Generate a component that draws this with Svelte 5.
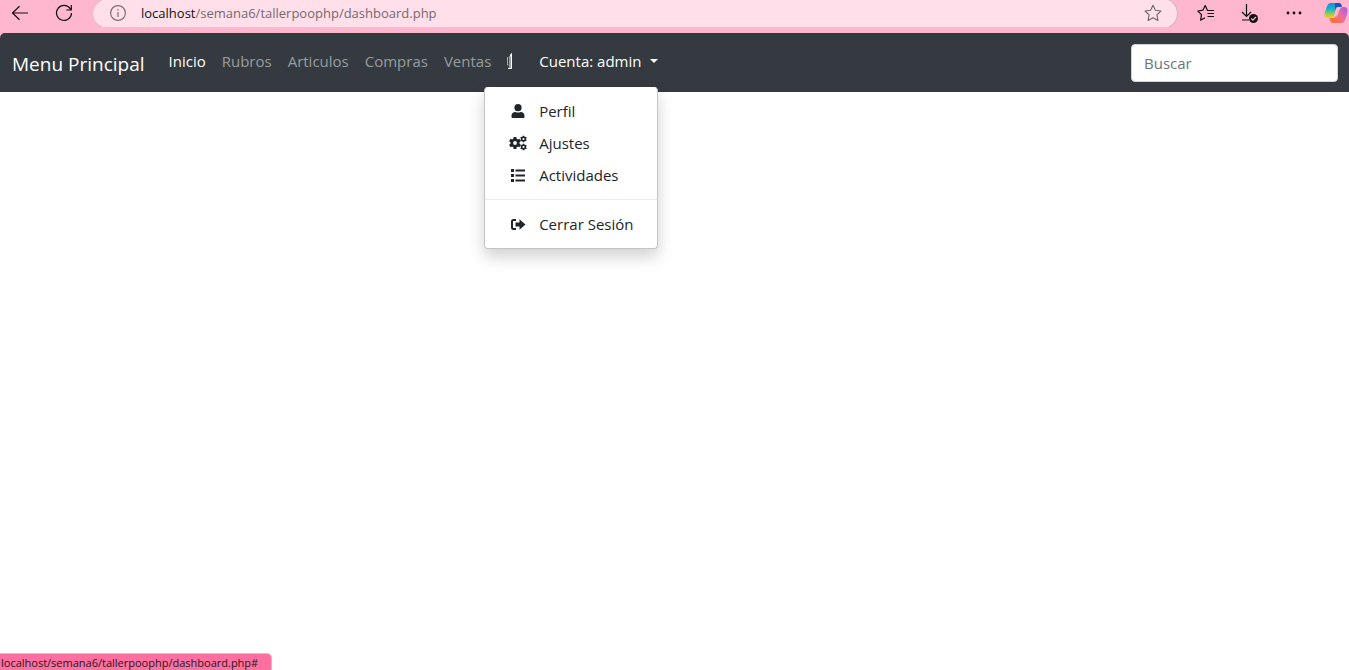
<script>
  const links = ['Inicio', 'Rubros', 'Articulos', 'Compras', 'Ventas'];
  const teeth = [0, 60, 120, 180, 240, 300];
  let open = $state(true);
</script>

{#snippet gear(cx, cy, s)}
  <g transform="translate({cx} {cy}) scale({s})">
    {#each teeth as a}
      <path d="M-1.4-6h2.8l.4 3h-3.6z" transform="rotate({a})" />
    {/each}
    <path fill-rule="evenodd" d="M0-4.5a4.5 4.5 0 1 0 0 9a4.5 4.5 0 0 0 0-9zM0-1.9a1.9 1.9 0 1 1 0 3.8a1.9 1.9 0 0 1 0-3.8z" />
  </g>
{/snippet}

<div class="page">
  <div class="browser">
    <button class="tool back" aria-label="Atrás">
      <svg width="18" height="16" viewBox="0 0 18 16" fill="none" stroke="#111" stroke-width="1.2"><path d="M17 8H1.5M8.5 1.2L1.5 8l7 6.8" /></svg>
    </button>
    <button class="tool reload" aria-label="Actualizar">
      <svg width="18" height="18" viewBox="0 0 18 18" fill="none" stroke="#111" stroke-width="1.2"><path d="M16.5 9a7.5 7.5 0 1 1-1.3-4.300L16 6M16.300 1v5h-5" /></svg>
    </button>
    <div class="address">
      <svg width="18" height="18" viewBox="0 0 18 18" fill="none" stroke="#7d6f74" stroke-width="1.2"><circle cx="9" cy="9" r="7.4" /><path d="M9 8v5M9 5v1.5" /></svg>
      <span class="url"><b>localhost</b>/semana6/tallerpoophp/dashboard.php</span>
      <button class="tool" aria-label="Favorito">
        <svg width="18" height="18" viewBox="0 0 18 18" fill="none" stroke="#716369" stroke-width="1.1" stroke-linejoin="round"><path d="M9 1.3l2.4 5 5.5.7-4 3.8 1 5.6L9 13.7l-4.9 2.7 1-5.6-4-3.8 5.5-.7z" /></svg>
      </button>
    </div>
    <div class="tools">
      <button class="tool" aria-label="Favoritos">
        <svg width="18" height="18" viewBox="0 0 18 18" fill="none" stroke="#111" stroke-width="1.2" stroke-linejoin="round"><path d="M11.500 6.500H10.500L8.200 1.500 5.900 6.200.8 7l3.700 3.700-.9 5.400 4.400-2.300M10.500 6.500H17M10.500 9.500H17M10.500 12.500H17" /></svg>
      </button>
      <button class="tool" aria-label="Descargas">
        <svg width="18" height="20" viewBox="0 0 18 20" fill="none" stroke="#111" stroke-width="1.200"><path d="M5.500 1v12M1 9l4.500 4.500L10 9M1 17h7" /><circle cx="12.500" cy="15.500" r="4.500" fill="#111" stroke="none" /><path d="M10.300 15.500l1.600 1.600 3-3.100" stroke="#ffb6cf" /></svg>
      </button>
      <button class="tool" aria-label="Más">
        <svg width="18" height="18" viewBox="0 0 18 18" fill="#111"><circle cx="3" cy="9" r="1.400" /><circle cx="9" cy="9" r="1.400" /><circle cx="15" cy="9" r="1.400" /></svg>
      </button>
      <button class="tool" aria-label="Copilot">
        <svg width="24" height="22" viewBox="0 0 24 22">
          <defs>
            <linearGradient id="cool" x1="0" y1="0" x2="0" y2="1"><stop offset="0" stop-color="#1689e8" /><stop offset=".45" stop-color="#20b8c3" /><stop offset=".75" stop-color="#a6cf3d" /><stop offset="1" stop-color="#f7c915" /></linearGradient>
            <linearGradient id="warm" x1="1" y1="0" x2="0" y2="1"><stop offset="0" stop-color="#a15aed" /><stop offset=".5" stop-color="#ee6e9c" /><stop offset="1" stop-color="#fb6b35" /></linearGradient>
          </defs>
          <path fill="url(#cool)" d="M7 1h9c-3 0-3 3-4 6l-2 6c-1 2-2 3-4 3H4c-4 0-4-3-3-6l2-6c1-2 2-3 4-3z" />
          <path fill="#1856bd" d="M11 1h4c2 0 2.500 1.500 3 4h-4c-2 0-2 1-3 3z" />
          <path fill="url(#warm)" d="M17 21H9c3 0 3-3 4-6l2-6c1-2 2-4 4-4h1c4 0 4 4 3 7l-2 6c-1 2-2 3-4 3z" />
          <path fill="#f9713b" d="M13 21H9c-2 0-3-1.500-3.500-5H9c2 0 2.500-1 3.500-3z" />
        </svg>
      </button>
    </div>
  </div>

  <nav class="navbar">
    <a class="brand" href="#top">Menu Principal</a>
    <ul class="links">
      {#each links as link, i}
        <li><a class="link" class:active={i === 0} href="#{link}">{link}</a></li>
      {/each}
      <li>
        <a class="link narrow" href="#panel" aria-label="Panel">
          <svg width="8" height="18" viewBox="0 0 8 18" fill="none"><path d="M1 5C0 7 0 11 1 13.500" stroke="#c5c9cd" /><path d="M2 5l2.500-4v15.500H1.500V15.500H2z" fill="#9a9ea2" /><path d="M1 16.500h3.500V1.500L3 4.500" stroke="#fff" /></svg>
        </a>
      </li>
      <li class="account">
        <button class="link active toggle" aria-expanded={open} onclick={() => (open = !open)}>Cuenta: admin<span class="caret"></span></button>
        {#if open}
          <div class="menu">
            <a href="#perfil"><svg width="18" height="16" viewBox="0 0 18 16"><circle cx="9" cy="4.700" r="3.600" /><path d="M2.500 15v-2c0-2.500 1.500-4 4-4 1.500.7 3.500.7 5 0 2.500 0 4 1.500 4 4v1q0 1-1 1h-11q-1 0-1-1z" /></svg>Perfil</a>
            <a href="#ajustes"><svg width="18" height="16" viewBox="0 0 18 16">{@render gear(6, 8, 1)}{@render gear(14.500, 4, 0.560)}{@render gear(14.500, 12, 0.560)}</svg>Ajustes</a>
            <a href="#actividades"><svg width="18" height="16" viewBox="0 0 18 16"><path d="M2 2h3v3H2zM2 7h3v3H2zM2 12h3v3H2zM6.500 2.500H16v2H6.500zM6.500 7.500H16v2H6.500zM6.500 12.500H16v2H6.500z" /></svg>Actividades</a>
            <hr />
            <a href="#salir"><svg width="18" height="16" viewBox="0 0 18 16"><path d="M7 4H4.500Q3 4 3 5.500v6Q3 13 4.500 13H7" fill="none" stroke="#212529" stroke-width="2" /><path d="M6.500 6.500v4h4v3.200L16.500 8.500l-6-5.200v3.200z" /></svg>Cerrar Sesión</a>
          </div>
        {/if}
      </li>
    </ul>
    <form class="search" onsubmit={(e) => e.preventDefault()}>
      <input type="search" placeholder="Buscar" aria-label="Buscar" />
    </form>
  </nav>

  <main></main>
  <div class="status">localhost/semana6/tallerpoophp/dashboard.php#</div>
</div>

<style>
  :global(body) {
    margin: 0;
    background: #fff;
  }
  .page {
    min-height: 100vh;
    display: flex;
    flex-direction: column;
    font-family: 'Open Sans', 'Noto Sans', sans-serif;
    font-size: 15px;
    line-height: 24px;
    color: #212529;
  }
  .page * {
    box-sizing: border-box;
  }
  svg {
    display: block;
    flex: none;
  }
  button {
    font: inherit;
    border: 0;
    background: none;
    padding: 0;
    cursor: pointer;
  }
  a {
    color: inherit;
    text-decoration: none;
  }
  .browser {
    display: flex;
    align-items: flex-start;
    height: 33px;
    background: #ffb6cf;
  }
  .tool {
    display: flex;
    align-items: center;
    justify-content: center;
    height: 26px;
  }
  .back {
    margin-left: 11px;
  }
  .reload {
    margin: 0 20px 0 26px;
  }
  .address {
    flex: 1;
    display: flex;
    align-items: center;
    gap: 14px;
    height: 31px;
    margin-top: -2px;
    padding: 0 15px 1px 16px;
    background: #ffe0ea;
    border: 1px solid #d5b4bf;
    border-left: 0;
    border-radius: 16px;
  }
  .url {
    flex: 1;
    font-size: 13px;
    color: #756970;
  }
  .url b {
    font-weight: 400;
    color: #111;
  }
  .tools {
    display: flex;
    gap: 26px;
    margin-left: 19px;
  }
  .tools .tool:last-child {
    margin: 0 1px 0 -5px;
  }
  .navbar {
    display: flex;
    align-items: center;
    height: 59px;
    padding: 0 11px 0 12px;
    background: #343a40;
    border-radius: 5px 5px 0 0;
    box-shadow: 0 -6px 0 #ffb6cf;
  }
  .brand {
    margin: 2px 16px 0 0;
    font-size: 19px;
    color: #fff;
  }
  .links {
    display: flex;
    margin: 0 0 4px;
    padding: 0;
    list-style: none;
  }
  .link {
    display: flex;
    align-items: center;
    height: 40px;
    padding: 0 8px;
    color: #999c9f;
  }
  .active {
    color: #fff;
  }
  .narrow {
    padding-right: 16px;
  }
  .account {
    position: relative;
  }
  .caret {
    margin-left: 9px;
    border: 4px solid transparent;
    border-top-color: #fff;
    border-bottom: 0;
  }
  .menu {
    position: absolute;
    top: 46px;
    right: 8px;
    z-index: 2;
    width: max-content;
    padding: 7px 0 8px;
    background: #fff;
    border: 1px solid #c4c4c4;
    border-top-color: #fff;
    border-radius: 4px;
    box-shadow: 0 8px 16px rgba(0, 0, 0, 0.18);
  }
  .menu a {
    display: flex;
    align-items: center;
    gap: 12px;
    padding: 4px 24px;
    color: #212529;
    fill: #212529;
  }
  .menu hr {
    margin: 8px 0;
    border: 0;
    border-top: 1px solid #e9ecef;
  }
  .search {
    margin-left: auto;
  }
  .search input {
    display: block;
    width: 207px;
    height: 38px;
    padding: 0 12px;
    font: inherit;
    color: #495057;
    background: #fff;
    border: 1px solid #ced4da;
    border-radius: 4px;
    appearance: none;
  }
  .search input::placeholder {
    color: #6c757d;
    opacity: 1;
  }
  main {
    flex: 1;
  }
  .status {
    align-self: flex-start;
    padding: 2px 13px 0 1px;
    font-size: 11px;
    line-height: 14px;
    color: #1a1a1a;
    background: #ff6fa0;
    border-top: 1px solid #d8c0c8;
    border-right: 1px solid #d8c0c8;
    border-radius: 0 5px 0 0;
  }
</style>
